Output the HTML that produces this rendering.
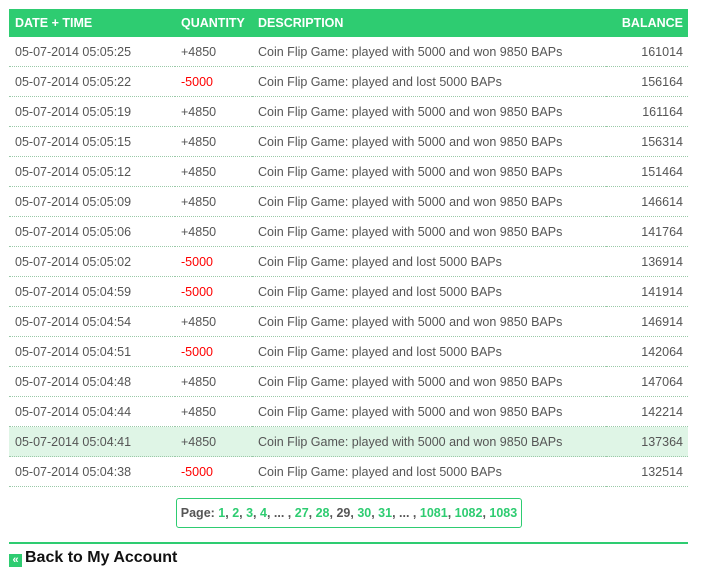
<!DOCTYPE html>
<html><head><style>
body{margin:0;background:#fff;font-family:"Liberation Sans",sans-serif;width:720px;height:563px;overflow:hidden;position:relative}
table{position:absolute;left:9px;top:9px;width:679px;border-collapse:collapse;font-size:12.5px;color:#555}
th{background:#2ecc71;color:#fff;font-weight:bold;text-align:left;height:28px;padding:0 0 0 6px;font-size:12.5px}
td{height:29px;padding:0 0 0 6px;border-bottom:1px dotted #9ac9a8}
.r{text-align:right;padding-right:5px}
.n{color:#f00}
tr.h td{background:#dff5e6}
.pg{position:absolute;left:176px;top:498px;width:344px;height:28px;border:1px solid #2ecc71;border-radius:3px;font-size:12.5px;font-weight:bold;color:#555;text-align:center;line-height:29px}
.pg b{color:#2ecc71}
.line{position:absolute;left:9px;top:542px;width:679px;height:2px;background:#2ecc71}
.back{position:absolute;left:9px;top:549px;font-size:16px;font-weight:bold;color:#111}
.back i{display:inline-block;width:13px;height:13px;background:#2ecc71;vertical-align:-1px;margin-right:3px;color:#fff;font-style:normal;font-size:11px;line-height:13px;text-align:center}
</style></head><body>
<table>
<tr><th style="width:160px">DATE + TIME</th><th style="width:71px">QUANTITY</th><th>DESCRIPTION</th><th class="r" style="text-align:right">BALANCE</th></tr>
<tr><td>05-07-2014 05:05:25</td><td>+4850</td><td>Coin Flip Game: played with 5000 and won 9850 BAPs</td><td class="r">161014</td></tr>
<tr><td>05-07-2014 05:05:22</td><td class="n">-5000</td><td>Coin Flip Game: played and lost 5000 BAPs</td><td class="r">156164</td></tr>
<tr><td>05-07-2014 05:05:19</td><td>+4850</td><td>Coin Flip Game: played with 5000 and won 9850 BAPs</td><td class="r">161164</td></tr>
<tr><td>05-07-2014 05:05:15</td><td>+4850</td><td>Coin Flip Game: played with 5000 and won 9850 BAPs</td><td class="r">156314</td></tr>
<tr><td>05-07-2014 05:05:12</td><td>+4850</td><td>Coin Flip Game: played with 5000 and won 9850 BAPs</td><td class="r">151464</td></tr>
<tr><td>05-07-2014 05:05:09</td><td>+4850</td><td>Coin Flip Game: played with 5000 and won 9850 BAPs</td><td class="r">146614</td></tr>
<tr><td>05-07-2014 05:05:06</td><td>+4850</td><td>Coin Flip Game: played with 5000 and won 9850 BAPs</td><td class="r">141764</td></tr>
<tr><td>05-07-2014 05:05:02</td><td class="n">-5000</td><td>Coin Flip Game: played and lost 5000 BAPs</td><td class="r">136914</td></tr>
<tr><td>05-07-2014 05:04:59</td><td class="n">-5000</td><td>Coin Flip Game: played and lost 5000 BAPs</td><td class="r">141914</td></tr>
<tr><td>05-07-2014 05:04:54</td><td>+4850</td><td>Coin Flip Game: played with 5000 and won 9850 BAPs</td><td class="r">146914</td></tr>
<tr><td>05-07-2014 05:04:51</td><td class="n">-5000</td><td>Coin Flip Game: played and lost 5000 BAPs</td><td class="r">142064</td></tr>
<tr><td>05-07-2014 05:04:48</td><td>+4850</td><td>Coin Flip Game: played with 5000 and won 9850 BAPs</td><td class="r">147064</td></tr>
<tr><td>05-07-2014 05:04:44</td><td>+4850</td><td>Coin Flip Game: played with 5000 and won 9850 BAPs</td><td class="r">142214</td></tr>
<tr class="h"><td>05-07-2014 05:04:41</td><td>+4850</td><td>Coin Flip Game: played with 5000 and won 9850 BAPs</td><td class="r">137364</td></tr>
<tr><td>05-07-2014 05:04:38</td><td class="n">-5000</td><td>Coin Flip Game: played and lost 5000 BAPs</td><td class="r">132514</td></tr>
</table>
<div class="pg">Page: <b>1</b>, <b>2</b>, <b>3</b>, <b>4</b>, ... , <b>27</b>, <b>28</b>, 29, <b>30</b>, <b>31</b>, ... , <b>1081</b>, <b>1082</b>, <b>1083</b></div>
<div class="line"></div>
<div class="back"><i>«</i>Back to My Account</div>
</body></html>
